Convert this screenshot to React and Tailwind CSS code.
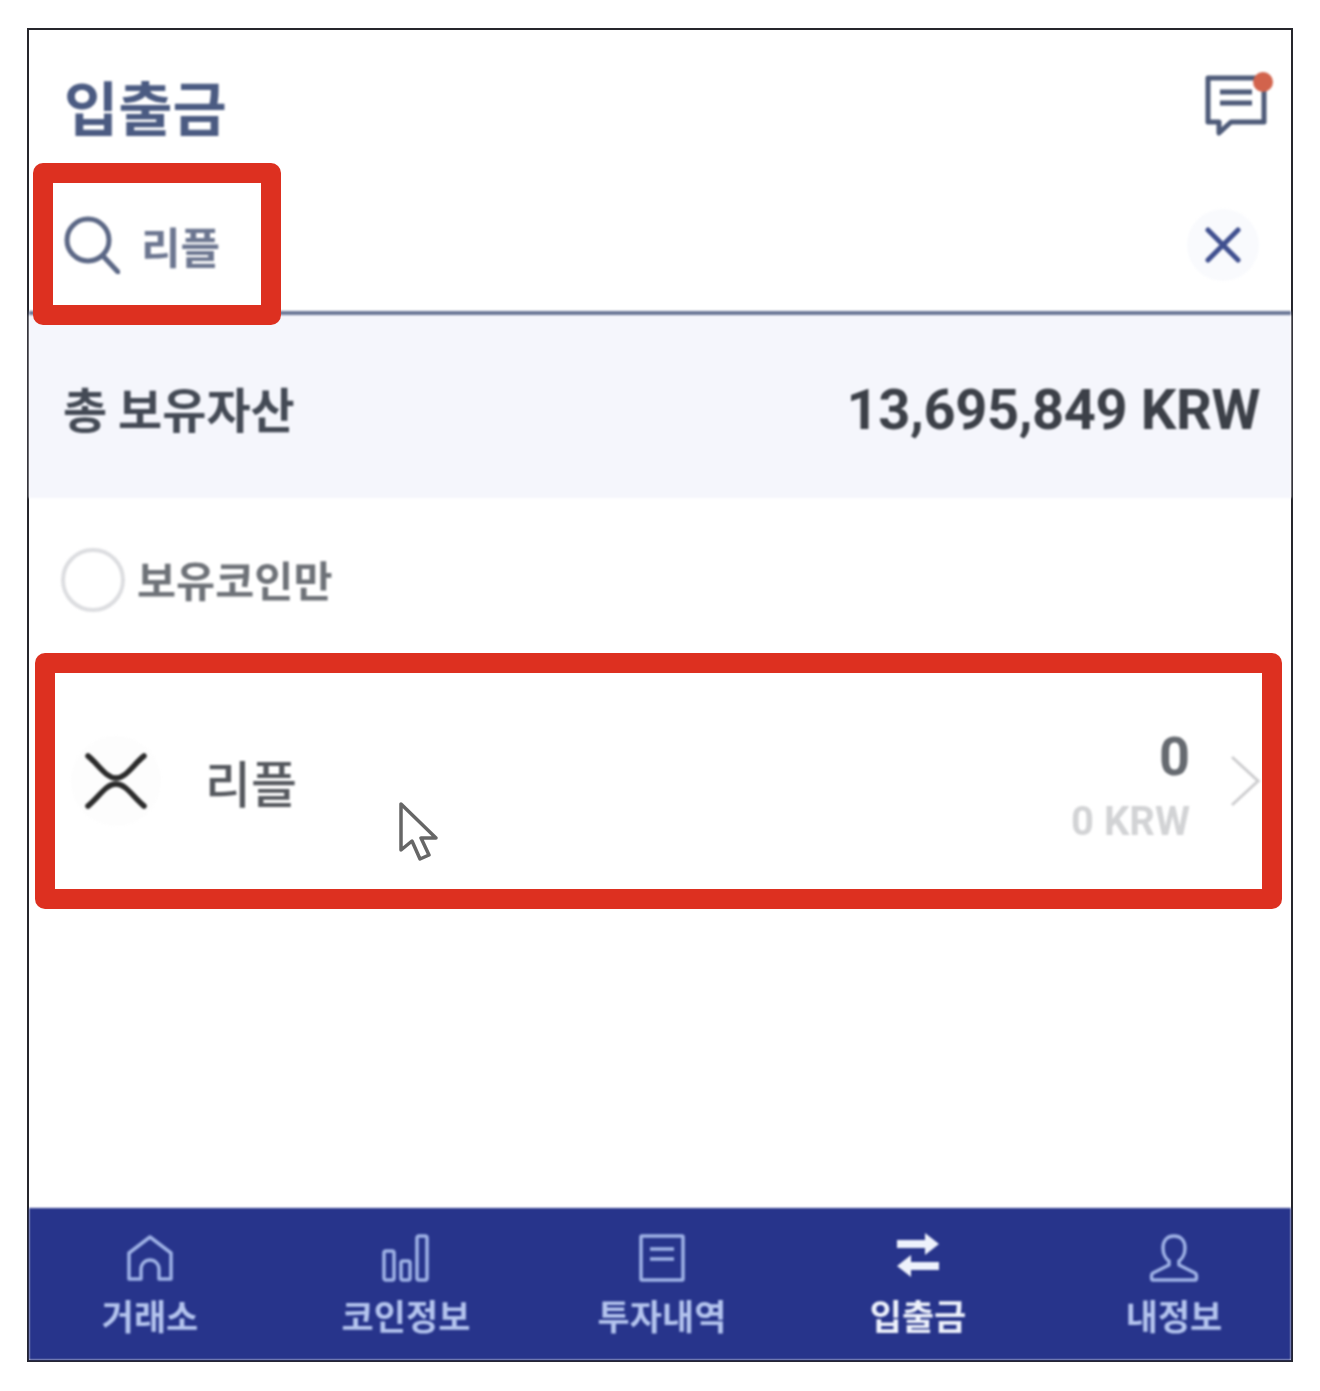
import React from "react";

function SearchIcon() {
  return (
    <svg width="56" height="58" viewBox="0 0 56 58" fill="none" stroke="#5b6785" strokeWidth="5" strokeLinecap="round">
      <circle cx="24" cy="24" r="21" />
      <path d="M39 40l15 16" />
    </svg>
  );
}

function ChatIcon() {
  return (
    <div className="relative w-[68px] h-[64px]">
      <svg width="62" height="62" viewBox="0 0 62 62" fill="none" stroke="#4d5a78" strokeWidth="5" className="absolute left-0 top-[3px]">
        <path d="M3 3h56v44H26L14 58V47H3z" strokeLinejoin="round" />
        <path d="M15 17h32M15 28h32" />
      </svg>
      <span className="absolute right-0 top-0 w-[20px] h-[20px] rounded-full bg-[#d2634c]" />
    </div>
  );
}

function XrpIcon() {
  return (
    <svg width="62" height="56" viewBox="0 0 62 56" fill="none" stroke="#2b2b2b" strokeWidth="5.5" strokeLinecap="round">
      <path d="M3 3C14 12 21 25 31 25S48 12 59 3" />
      <path d="M3 53C14 44 21 31 31 31S48 44 59 53" />
    </svg>
  );
}

const tabs = [
  {
    label: "거래소",
    icon: (
      <svg width="48" height="48" viewBox="0 0 48 48" fill="none" stroke="#9fb2e6" strokeWidth="3.5" strokeLinejoin="round">
        <path d="M3 45V19L24 3l21 16v26H33V35a9 9 0 0 0-18 0v10z" />
      </svg>
    ),
  },
  {
    label: "코인정보",
    icon: (
      <svg width="48" height="48" viewBox="0 0 48 48" fill="none" stroke="#9fb2e6" strokeWidth="3.5">
        <rect x="2" y="17" width="10" height="29" rx="2" />
        <rect x="19" y="27" width="9" height="19" rx="2" />
        <rect x="35" y="2" width="10" height="44" rx="2" />
      </svg>
    ),
  },
  {
    label: "투자내역",
    icon: (
      <svg width="48" height="48" viewBox="0 0 48 48" fill="none" stroke="#9fb2e6" strokeWidth="3.5">
        <rect x="3" y="2" width="42" height="44" rx="1" />
        <path d="M12 15h24M12 25h24" />
      </svg>
    ),
  },
  {
    label: "입출금",
    active: true,
    icon: (
      <svg width="48" height="48" viewBox="0 0 48 48" fill="#eef2fc" className="-mt-[3px] mb-[3px]">
        <path d="M3 9h28V2l14 11-14 11v-7H3z" />
        <path d="M45 31H17v-7L3 35l14 11v-7h28z" />
      </svg>
    ),
  },
  {
    label: "내정보",
    icon: (
      <svg width="50" height="48" viewBox="0 0 50 48" fill="none" stroke="#9fb2e6" strokeWidth="3.5" strokeLinejoin="round">
        <path d="M25 2c-8 0-11 6-11 12 0 6 3 11 6 13v4L4 39c-2 1-2 7 0 7h42c2 0 2-6 0-7l-16-8v-4c3-2 6-7 6-13 0-6-3-12-11-12z" />
      </svg>
    ),
  },
];

export default function App() {
  return (
    <div className="relative w-[1320px] h-[1391px] bg-white pt-[28px] pl-[27px] font-['Noto_Sans_CJK_KR','Noto_Sans',sans-serif]">
      <div className="w-[1266px] h-[1334px] border-2 border-[#26262c]">
        <div className="h-full flex flex-col blur-[0.9px]">
          {/* Header */}
          <div className="h-[135px] flex items-center justify-between pl-[35px] pr-[18px]">
            <h1 className="text-[59px] leading-none font-bold text-[#4b5b82] pt-[15px]">입출금</h1>
            <div className="mt-[12px]">
              <ChatIcon />
            </div>
          </div>

          {/* Search */}
          <div className="h-[150px] border-b-4 border-[#6a7696] flex items-center justify-between pl-[35px] pr-[32px] pt-[14px]">
            <div className="flex items-center gap-[21px]">
              <SearchIcon />
              <span className="text-[43px] leading-none font-bold text-[#6c7690]">리플</span>
            </div>
            <div className="w-[72px] h-[72px] rounded-full bg-[#f9fafd] flex items-center justify-center">
              <svg width="36" height="36" viewBox="0 0 36 36" stroke="#3f4f8f" strokeWidth="5" strokeLinecap="round">
                <path d="M3 3l30 30M33 3L3 33" />
              </svg>
            </div>
          </div>

          {/* Total */}
          <div className="h-[183px] bg-[#f5f6fc] flex items-center justify-between pl-[34px] pr-[31px]">
            <span className="text-[48px] leading-none font-bold text-[#444a55]">총 보유자산</span>
            <span className="text-[56px] leading-none font-bold tracking-[-0.4px] text-[#3c4048] font-['Roboto',sans-serif] pt-[6px]">13,695,849 KRW</span>
          </div>

          {/* Filter */}
          <div className="h-[155px] flex items-center gap-[12px] pl-[32px] pt-[8px]">
            <span className="w-[64px] h-[64px] rounded-full border-4 border-[#dcdde0] bg-white" />
            <span className="text-[42.5px] leading-none font-bold text-[#6e7278]">보유코인만</span>
          </div>

          {/* Coin row */}
          <div className="h-[255px] flex items-center pl-[42px] pr-[31px]">
            <div className="w-[90px] h-[90px] rounded-full bg-[#fdfdfd] flex items-center justify-center">
              <XrpIcon />
            </div>
            <span className="ml-[44px] text-[50px] leading-none font-medium text-[#55585e]">리플</span>
            <div className="ml-auto flex flex-col items-end font-['Roboto',sans-serif] pt-[22px]">
              <span className="text-[54px] leading-[60px] font-bold text-[#666a70]">0</span>
              <span className="text-[40px] leading-[70px] font-bold text-[#d2d3d5]">0 KRW</span>
            </div>
            <svg width="30" height="52" viewBox="0 0 30 52" fill="none" stroke="#cdcdcf" strokeWidth="3" className="ml-[40px]">
              <path d="M2 2l26 24L2 50" />
            </svg>
          </div>

          <div className="flex-1" />

          {/* Bottom tabs */}
          <div className="h-[152px] bg-[#27348b] flex justify-between pl-[21px] pr-[17px] pt-[26px]">
            {tabs.map((tab) => (
              <div key={tab.label} className="w-[200px] flex flex-col items-center">
                {tab.icon}
                <span className={`mt-[11px] text-[35px] leading-[44px] font-bold whitespace-nowrap ${tab.active ? "text-[#eef2fc]" : "text-[#b4c4ee]"}`}>
                  {tab.label}
                </span>
              </div>
            ))}
          </div>
        </div>
      </div>

      {/* Red highlight boxes drawn over the capture */}
      <div className="absolute left-[33px] top-[163px] w-[248px] h-[162px] border-[20px] border-[#dd3020] rounded-[10px] blur-[0.6px]" />
      <div className="absolute left-[35px] top-[653px] w-[1247px] h-[256px] border-[20px] border-[#dd3020] rounded-[10px] blur-[0.6px]" />

      {/* Mouse pointer */}
      <svg width="40" height="60" viewBox="0 0 40 60" fill="white" stroke="#666" strokeWidth="3.5" strokeLinejoin="round" className="absolute left-[399px] top-[802px] blur-[0.5px]">
        <path d="M2 2v46l11-9 8 18 9-4-8-17h15z" />
      </svg>
    </div>
  );
}
